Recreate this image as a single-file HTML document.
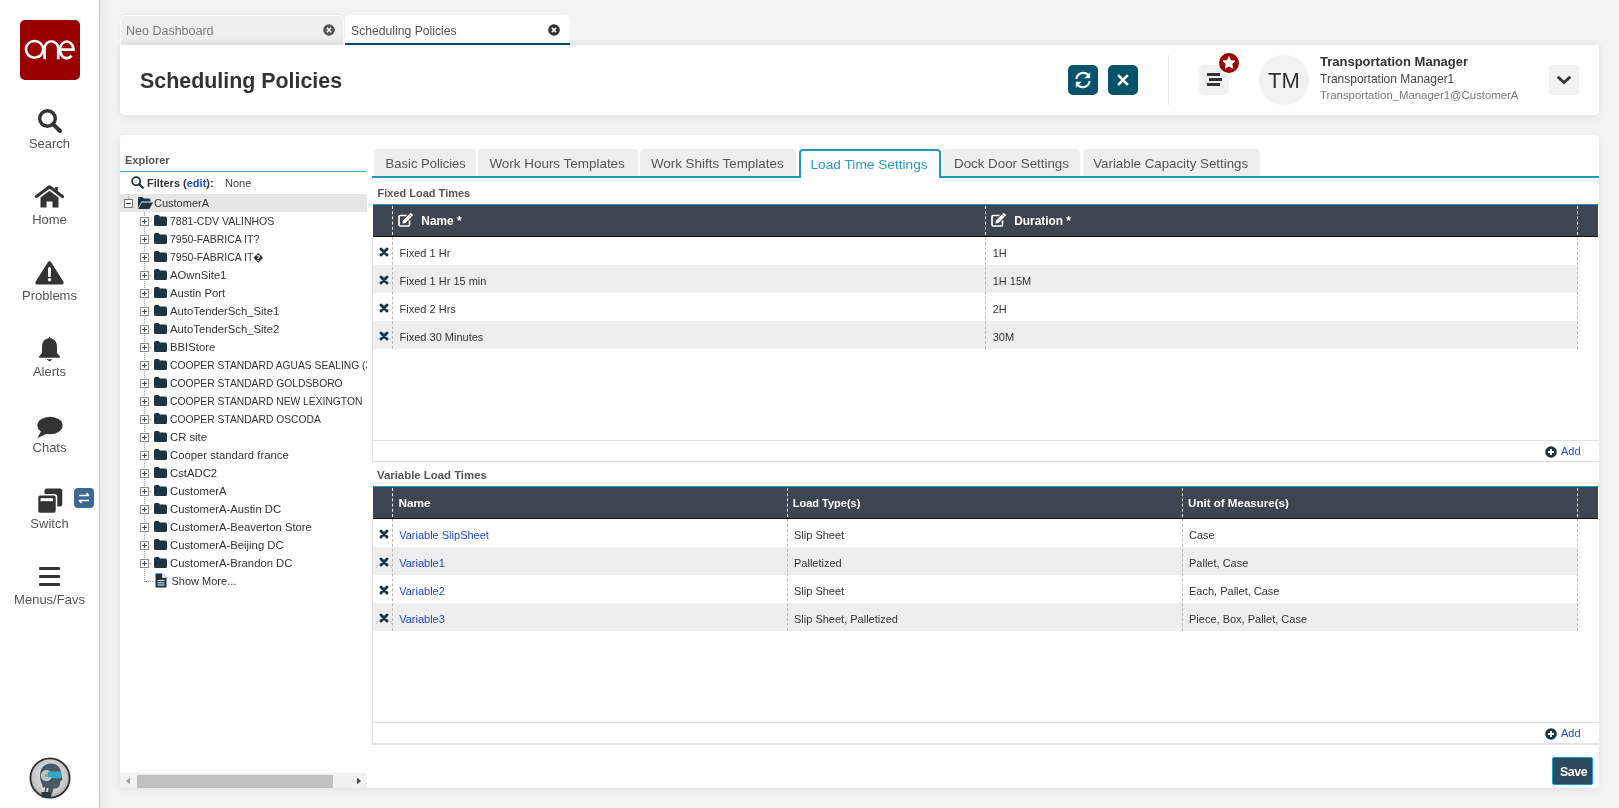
<!DOCTYPE html>
<html><head><meta charset="utf-8">
<style>
*{margin:0;padding:0;box-sizing:border-box}
html,body{width:1619px;height:808px;overflow:hidden;background:#f3f3f3;font-family:"Liberation Sans",sans-serif;color:#333}
.a{position:absolute}
.t{position:absolute;white-space:nowrap;line-height:1}
body{will-change:transform}
svg{position:absolute;display:block}
</style></head><body>

<!-- ============ SIDEBAR ============ -->
<div class="a" style="left:0;top:0;width:100px;height:808px;background:#fff;border-right:1px solid #c9c9c9;box-shadow:3px 0 12px rgba(0,0,0,0.06)"></div>
<div class="a" style="left:20px;top:20px;width:60px;height:60px;background:#990000;border-radius:5px"></div>
<svg style="left:20px;top:20px" width="60" height="60" viewBox="0 0 60 60">
 <g fill="none" stroke="#fff" stroke-width="2.6">
  <ellipse cx="14.55" cy="29.35" rx="8.6" ry="8.4"/>
  <path d="M24.6 39.2 V28.6 A6.8 7.4 0 0 1 38.2 28.6 V39.2"/>
  <path d="M40 29.6 H53.5 A6.8 8.3 0 1 0 51.6 35.6"/>
 </g>
</svg>


<!-- nav -->
<svg style="left:37px;top:108px" width="26" height="26" viewBox="0 0 26 26"><circle cx="10.5" cy="10.5" r="7.8" fill="none" stroke="#333" stroke-width="3.4"/><path d="M16.3 16.3L23 23" stroke="#333" stroke-width="4" stroke-linecap="round"/></svg>
<div class="t" style="left:0;width:99px;text-align:center;top:137px;font-size:13px;color:#555">Search</div>
<svg style="left:35px;top:185px" width="29" height="23" viewBox="0 0 29 23"><path d="M1.5 11.5L14.5 1.8L27.5 11.5" fill="none" stroke="#333" stroke-width="3" stroke-linecap="round" stroke-linejoin="round"/><path d="M21.5 2V7" stroke="#333" stroke-width="2.6"/><path d="M5.5 12.5L14.5 5.8L23.5 12.5V22.5H17.5V16.5H11.5V22.5H5.5Z" fill="#333"/></svg>
<div class="t" style="left:0;width:99px;text-align:center;top:213px;font-size:13px;color:#555">Home</div>
<svg style="left:34px;top:260px" width="31" height="25" viewBox="0 0 31 25"><path d="M15.5 1.2 Q16.6 1.2 17.3 2.4 L29.6 22 Q30.3 23.9 28.3 24.4 H2.7 Q0.7 23.9 1.4 22 L13.7 2.4 Q14.4 1.2 15.5 1.2Z" fill="#333"/><path d="M15.5 8.5V15.5" stroke="#fff" stroke-width="3" stroke-linecap="round"/><circle cx="15.5" cy="19.8" r="1.7" fill="#fff"/></svg>
<div class="t" style="left:0;width:99px;text-align:center;top:289px;font-size:13px;color:#555">Problems</div>
<svg style="left:38px;top:336px" width="23" height="26" viewBox="0 0 23 26"><path d="M11.5 0.5 L12.6 2.3 Q19 3.6 19 11 V17 L22 20.5 Q22.3 21.8 21 21.8 H2 Q0.7 21.8 1 20.5 L4 17 V11 Q4 3.6 10.4 2.3Z" fill="#333"/><path d="M8.5 23.2 H14.5 L11.5 25.6Z" fill="#333"/></svg>
<div class="t" style="left:0;width:99px;text-align:center;top:365px;font-size:13px;color:#555">Alerts</div>
<svg style="left:36px;top:416px" width="27" height="23" viewBox="0 0 27 23"><ellipse cx="14" cy="9.5" rx="12.6" ry="8.8" fill="#333"/><path d="M5 15.5 L1.2 22.3 L11 17.5Z" fill="#333"/></svg>
<div class="t" style="left:0;width:99px;text-align:center;top:441px;font-size:13px;color:#555">Chats</div>
<svg style="left:37px;top:488px" width="26" height="26" viewBox="0 0 26 26"><rect x="7.5" y="0.5" width="17.8" height="18" rx="2.5" fill="#333"/><rect x="0.5" y="6.8" width="19" height="18.8" rx="2.5" fill="#333" stroke="#fff" stroke-width="1.6"/><rect x="3.5" y="10.2" width="12.5" height="3" fill="#fff"/></svg>
<div class="a" style="left:74px;top:488px;width:20px;height:20px;background:#3a6890;border-radius:4px"></div>
<svg style="left:74px;top:488px" width="20" height="20" viewBox="0 0 20 20"><path d="M5 7.5H15M12.3 5L15 7.5 M15 12.5H5M7.7 15L5 12.5" fill="none" stroke="#fff" stroke-width="1.5"/></svg>
<div class="t" style="left:0;width:99px;text-align:center;top:517px;font-size:13px;color:#555">Switch</div>
<div class="a" style="left:39px;top:567px;width:21px;height:3.4px;background:#333;border-radius:1px"></div>
<div class="a" style="left:39px;top:575px;width:21px;height:3.4px;background:#333;border-radius:1px"></div>
<div class="a" style="left:39px;top:583px;width:21px;height:3.4px;background:#333;border-radius:1px"></div>
<div class="t" style="left:0;width:99px;text-align:center;top:593px;font-size:13px;color:#555">Menus/Favs</div>
<!-- avatar -->
<svg style="left:29px;top:757px" width="42" height="42" viewBox="0 0 42 42">
 <defs><radialGradient id="sil" cx="0.5" cy="0.45" r="0.6"><stop offset="0" stop-color="#f6f6f6"/><stop offset="0.75" stop-color="#c4c4c4"/><stop offset="1" stop-color="#9a9a9a"/></radialGradient></defs>
 <circle cx="21" cy="21" r="19.6" fill="url(#sil)" stroke="#2b2e30" stroke-width="1.8"/>
 <path d="M11 19 Q11 7 22 6.5 Q31.5 7 32 16 L33.5 23 L31.5 24 Q31 28 30 30 Q27 32 24.5 31.5 L23 37 Q22 39.5 18 39.5 L13 38 L13.5 33 Q14 29 13 27 Q11 24 11 19Z" fill="#4a5963"/>
 <circle cx="17.5" cy="18.5" r="5.5" fill="#c9d3d9"/>
 <circle cx="17.5" cy="18.5" r="3.6" fill="none" stroke="#c9a85a" stroke-width="0.8"/>
 <circle cx="17.5" cy="18.5" r="2" fill="#8fa0aa"/>
 <path d="M19 14.5 H32.5 V21 Q26 22 19 20Z" fill="#30a9bf"/>
 <path d="M13 31 L16 30 L15 38 L13 38Z M17.5 31 L19.5 31 L18.5 38 L17 38Z" fill="#d5dde2"/>
 <path d="M12.5 35 H22 V40.5 H12.5Z" fill="#2f363b"/>
</svg>

<!-- ============ TOP TABS ============ -->
<div class="a" style="left:120px;top:15px;width:224px;height:30px;background:linear-gradient(#efefef 60%,#e9e9e9);border:1px solid #fbfbfb;border-bottom:none;border-radius:5px 5px 0 0;box-shadow:0 -1px 2px rgba(0,0,0,0.05)"></div>
<div class="t" style="left:126px;top:25px;font-size:12.5px;color:#7a7a7a">Neo Dashboard</div>
<svg style="left:323px;top:24px" width="12" height="12" viewBox="0 0 12 12"><circle cx="6" cy="6" r="5.8" fill="#555"/><path d="M3.8 3.8L8.2 8.2M8.2 3.8L3.8 8.2" stroke="#fff" stroke-width="1.6"/></svg>
<div class="a" style="left:345px;top:15px;width:225px;height:30px;background:#fff;border-radius:5px 5px 0 0;border-bottom:2px solid #03506a"></div>
<div class="t" style="left:351px;top:25px;font-size:12.2px;color:#555">Scheduling Policies</div>
<svg style="left:548px;top:24px" width="12" height="12" viewBox="0 0 12 12"><circle cx="6" cy="6" r="5.8" fill="#333"/><path d="M3.8 3.8L8.2 8.2M8.2 3.8L3.8 8.2" stroke="#fff" stroke-width="1.6"/></svg>

<!-- ============ HEADER CARD ============ -->
<div class="a" style="left:120px;top:45px;width:1479px;height:70px;background:#fff;border-radius:0 0 4px 4px;box-shadow:0 2px 9px rgba(0,0,0,0.07),0 -2px 5px rgba(0,0,0,0.04)"></div>
<div class="t" style="left:140px;top:71px;font-size:21.4px;font-weight:bold;color:#333">Scheduling Policies</div>


<div class="a" style="left:1068px;top:65px;width:30px;height:30px;background:#03546b;border-radius:5px"></div>
<svg style="left:1068px;top:65px" width="30" height="30" viewBox="0 0 30 30"><g fill="none" stroke="#fff" stroke-width="2.2"><path d="M8.4 14 A6.8 6.8 0 0 1 20.6 10.6"/><path d="M21.6 16 A6.8 6.8 0 0 1 9.4 19.4"/></g><path d="M22.2 7.2 V13.2 H16.4Z" fill="#fff"/><path d="M7.8 22.8 V16.8 H13.6Z" fill="#fff"/></svg>
<div class="a" style="left:1108px;top:65px;width:30px;height:30px;background:#03546b;border-radius:5px"></div>
<svg style="left:1108px;top:65px" width="30" height="30" viewBox="0 0 30 30"><path d="M10.2 10.2L19.8 19.8M19.8 10.2L10.2 19.8" stroke="#fff" stroke-width="2.6"/></svg>
<div class="a" style="left:1168px;top:55px;width:1px;height:50px;background:#e6e6e6"></div>
<div class="a" style="left:1199px;top:65px;width:30px;height:30px;background:#f2f2f2;border-radius:5px"></div>
<div class="a" style="left:1207px;top:73px;width:13px;height:2.6px;background:#333"></div>
<div class="a" style="left:1209px;top:78px;width:13px;height:2.6px;background:#333"></div>
<div class="a" style="left:1207px;top:83px;width:13px;height:2.6px;background:#333"></div>
<svg style="left:1219px;top:53px" width="20" height="20" viewBox="0 0 20 20"><circle cx="10" cy="10" r="10" fill="#990000"/><path d="M10 3.6 L11.8 7.6 L16.1 8 L12.9 10.9 L13.8 15.2 L10 13 L6.2 15.2 L7.1 10.9 L3.9 8 L8.2 7.6Z" fill="#fff" stroke="#fff" stroke-width="0.8" stroke-linejoin="round"/></svg>
<div class="a" style="left:1259px;top:55px;width:50px;height:50px;background:#f2f2f2;border-radius:50%"></div>
<div class="t" style="left:1268px;top:70px;font-size:22px;color:#333">TM</div>
<div class="t" style="left:1320px;top:55px;font-size:13px;font-weight:bold;color:#333">Transportation Manager</div>
<div class="t" style="left:1320px;top:73px;font-size:12px;color:#444">Transportation Manager1</div>
<div class="t" style="left:1320px;top:89.5px;font-size:11.35px;color:#777">Transportation_Manager1@CustomerA</div>
<div class="a" style="left:1549px;top:65px;width:30px;height:30px;background:#f2f2f2;border-radius:5px"></div>
<svg style="left:1549px;top:65px" width="30" height="30" viewBox="0 0 30 30"><path d="M8.7 11.8 L15 17.6 L21.3 11.8" fill="none" stroke="#333" stroke-width="2.8"/></svg>

<!-- ============ MAIN CARD ============ -->
<div class="a" style="left:120px;top:135px;width:1479px;height:653px;background:#fff;border-radius:4px;box-shadow:0 2px 9px rgba(0,0,0,0.07)"></div>

<!-- explorer -->
<div class="t" style="left:125px;top:155px;font-size:11px;font-weight:bold;color:#555">Explorer</div>
<div class="a" style="left:120px;top:171px;width:246px;height:1px;background:#3da7c6"></div>
<svg style="left:131px;top:176px" width="13" height="13" viewBox="0 0 13 13"><circle cx="5.2" cy="5.2" r="4" fill="none" stroke="#1d3445" stroke-width="1.8"/><path d="M8.2 8.2L11.8 11.8" stroke="#1d3445" stroke-width="2.2" stroke-linecap="round"/></svg>
<div class="t" style="left:147px;top:178px;font-size:11px;font-weight:bold;color:#333">Filters (<span style="color:#1d4ad8">edit</span>):</div>
<div class="t" style="left:225px;top:178px;font-size:11px;color:#444">None</div>
<div class="a" style="left:120px;top:194px;width:247px;height:18px;background:#e6e6e6"></div>
<div class="a" style="left:144px;top:212px;width:0;height:370px;border-left:1px dotted #a8a8a8"></div>
<div class="a" style="left:128px;top:194px;width:0;height:5px;border-left:1px dotted #a8a8a8"></div>
<svg style="left:124px;top:199px" width="9" height="9" viewBox="0 0 9 9"><rect x="0.5" y="0.5" width="8" height="8" fill="#fff" stroke="#777"/><path d="M2 4.5H7" stroke="#333" stroke-width="1"/></svg>
<svg style="left:138px;top:197px" width="15" height="12" viewBox="0 0 15 12"><path d="M0 1.4 Q0 0 1.4 0 H4.4 L5.8 1.6 H11 Q12.4 1.6 12.4 3 V4.4 H3.6 L0 11Z" fill="#1d3445"/><path d="M3.8 5.4 H15 L11.4 12 H0.2Z" fill="#1d3445"/></svg>
<div class="t" style="left:154px;top:198px;font-size:11px;color:#333">CustomerA</div>
<svg style="left:140px;top:217px" width="9" height="9" viewBox="0 0 9 9"><rect x="0.5" y="0.5" width="8" height="8" fill="#fff" stroke="#8c8c8c"/><path d="M2 4.5H7M4.5 2V7" stroke="#4a4a4a" stroke-width="1"/></svg>
<div class="a" style="left:150px;top:221px;width:1px;height:1px;background:#aaa"></div>
<svg style="left:154px;top:215px" width="13" height="11" viewBox="0 0 13 11"><path d="M0 1.6 Q0 0 1.6 0 H4.6 L6 1.6 H11.4 Q13 1.6 13 3.2 V9.4 Q13 11 11.4 11 H1.6 Q0 11 0 9.4Z" fill="#1d3445"/></svg>
<div class="t" style="left:170px;top:216px;font-size:10.5px;color:#333;max-width:197px;overflow:hidden">7881-CDV VALINHOS</div>
<svg style="left:140px;top:235px" width="9" height="9" viewBox="0 0 9 9"><rect x="0.5" y="0.5" width="8" height="8" fill="#fff" stroke="#8c8c8c"/><path d="M2 4.5H7M4.5 2V7" stroke="#4a4a4a" stroke-width="1"/></svg>
<div class="a" style="left:150px;top:239px;width:1px;height:1px;background:#aaa"></div>
<svg style="left:154px;top:233px" width="13" height="11" viewBox="0 0 13 11"><path d="M0 1.6 Q0 0 1.6 0 H4.6 L6 1.6 H11.4 Q13 1.6 13 3.2 V9.4 Q13 11 11.4 11 H1.6 Q0 11 0 9.4Z" fill="#1d3445"/></svg>
<div class="t" style="left:170px;top:234px;font-size:10.5px;color:#333;max-width:197px;overflow:hidden">7950-FABRICA IT?</div>
<svg style="left:140px;top:253px" width="9" height="9" viewBox="0 0 9 9"><rect x="0.5" y="0.5" width="8" height="8" fill="#fff" stroke="#8c8c8c"/><path d="M2 4.5H7M4.5 2V7" stroke="#4a4a4a" stroke-width="1"/></svg>
<div class="a" style="left:150px;top:257px;width:1px;height:1px;background:#aaa"></div>
<svg style="left:154px;top:251px" width="13" height="11" viewBox="0 0 13 11"><path d="M0 1.6 Q0 0 1.6 0 H4.6 L6 1.6 H11.4 Q13 1.6 13 3.2 V9.4 Q13 11 11.4 11 H1.6 Q0 11 0 9.4Z" fill="#1d3445"/></svg>
<div class="t" style="left:170px;top:252px;font-size:10.5px;color:#333;max-width:197px;overflow:hidden">7950-FABRICA IT�</div>
<svg style="left:140px;top:271px" width="9" height="9" viewBox="0 0 9 9"><rect x="0.5" y="0.5" width="8" height="8" fill="#fff" stroke="#8c8c8c"/><path d="M2 4.5H7M4.5 2V7" stroke="#4a4a4a" stroke-width="1"/></svg>
<div class="a" style="left:150px;top:275px;width:1px;height:1px;background:#aaa"></div>
<svg style="left:154px;top:269px" width="13" height="11" viewBox="0 0 13 11"><path d="M0 1.6 Q0 0 1.6 0 H4.6 L6 1.6 H11.4 Q13 1.6 13 3.2 V9.4 Q13 11 11.4 11 H1.6 Q0 11 0 9.4Z" fill="#1d3445"/></svg>
<div class="t" style="left:170px;top:270px;font-size:11.3px;color:#333;max-width:197px;overflow:hidden">AOwnSite1</div>
<svg style="left:140px;top:289px" width="9" height="9" viewBox="0 0 9 9"><rect x="0.5" y="0.5" width="8" height="8" fill="#fff" stroke="#8c8c8c"/><path d="M2 4.5H7M4.5 2V7" stroke="#4a4a4a" stroke-width="1"/></svg>
<div class="a" style="left:150px;top:293px;width:1px;height:1px;background:#aaa"></div>
<svg style="left:154px;top:287px" width="13" height="11" viewBox="0 0 13 11"><path d="M0 1.6 Q0 0 1.6 0 H4.6 L6 1.6 H11.4 Q13 1.6 13 3.2 V9.4 Q13 11 11.4 11 H1.6 Q0 11 0 9.4Z" fill="#1d3445"/></svg>
<div class="t" style="left:170px;top:288px;font-size:11.3px;color:#333;max-width:197px;overflow:hidden">Austin Port</div>
<svg style="left:140px;top:307px" width="9" height="9" viewBox="0 0 9 9"><rect x="0.5" y="0.5" width="8" height="8" fill="#fff" stroke="#8c8c8c"/><path d="M2 4.5H7M4.5 2V7" stroke="#4a4a4a" stroke-width="1"/></svg>
<div class="a" style="left:150px;top:311px;width:1px;height:1px;background:#aaa"></div>
<svg style="left:154px;top:305px" width="13" height="11" viewBox="0 0 13 11"><path d="M0 1.6 Q0 0 1.6 0 H4.6 L6 1.6 H11.4 Q13 1.6 13 3.2 V9.4 Q13 11 11.4 11 H1.6 Q0 11 0 9.4Z" fill="#1d3445"/></svg>
<div class="t" style="left:170px;top:306px;font-size:11.3px;color:#333;max-width:197px;overflow:hidden">AutoTenderSch_Site1</div>
<svg style="left:140px;top:325px" width="9" height="9" viewBox="0 0 9 9"><rect x="0.5" y="0.5" width="8" height="8" fill="#fff" stroke="#8c8c8c"/><path d="M2 4.5H7M4.5 2V7" stroke="#4a4a4a" stroke-width="1"/></svg>
<div class="a" style="left:150px;top:329px;width:1px;height:1px;background:#aaa"></div>
<svg style="left:154px;top:323px" width="13" height="11" viewBox="0 0 13 11"><path d="M0 1.6 Q0 0 1.6 0 H4.6 L6 1.6 H11.4 Q13 1.6 13 3.2 V9.4 Q13 11 11.4 11 H1.6 Q0 11 0 9.4Z" fill="#1d3445"/></svg>
<div class="t" style="left:170px;top:324px;font-size:11.3px;color:#333;max-width:197px;overflow:hidden">AutoTenderSch_Site2</div>
<svg style="left:140px;top:343px" width="9" height="9" viewBox="0 0 9 9"><rect x="0.5" y="0.5" width="8" height="8" fill="#fff" stroke="#8c8c8c"/><path d="M2 4.5H7M4.5 2V7" stroke="#4a4a4a" stroke-width="1"/></svg>
<div class="a" style="left:150px;top:347px;width:1px;height:1px;background:#aaa"></div>
<svg style="left:154px;top:341px" width="13" height="11" viewBox="0 0 13 11"><path d="M0 1.6 Q0 0 1.6 0 H4.6 L6 1.6 H11.4 Q13 1.6 13 3.2 V9.4 Q13 11 11.4 11 H1.6 Q0 11 0 9.4Z" fill="#1d3445"/></svg>
<div class="t" style="left:170px;top:342px;font-size:11.3px;color:#333;max-width:197px;overflow:hidden">BBIStore</div>
<svg style="left:140px;top:361px" width="9" height="9" viewBox="0 0 9 9"><rect x="0.5" y="0.5" width="8" height="8" fill="#fff" stroke="#8c8c8c"/><path d="M2 4.5H7M4.5 2V7" stroke="#4a4a4a" stroke-width="1"/></svg>
<div class="a" style="left:150px;top:365px;width:1px;height:1px;background:#aaa"></div>
<svg style="left:154px;top:359px" width="13" height="11" viewBox="0 0 13 11"><path d="M0 1.6 Q0 0 1.6 0 H4.6 L6 1.6 H11.4 Q13 1.6 13 3.2 V9.4 Q13 11 11.4 11 H1.6 Q0 11 0 9.4Z" fill="#1d3445"/></svg>
<div class="t" style="left:170px;top:360.7px;font-size:10.3px;color:#333;max-width:197px;overflow:hidden">COOPER STANDARD AGUAS SEALING (3</div>
<svg style="left:140px;top:379px" width="9" height="9" viewBox="0 0 9 9"><rect x="0.5" y="0.5" width="8" height="8" fill="#fff" stroke="#8c8c8c"/><path d="M2 4.5H7M4.5 2V7" stroke="#4a4a4a" stroke-width="1"/></svg>
<div class="a" style="left:150px;top:383px;width:1px;height:1px;background:#aaa"></div>
<svg style="left:154px;top:377px" width="13" height="11" viewBox="0 0 13 11"><path d="M0 1.6 Q0 0 1.6 0 H4.6 L6 1.6 H11.4 Q13 1.6 13 3.2 V9.4 Q13 11 11.4 11 H1.6 Q0 11 0 9.4Z" fill="#1d3445"/></svg>
<div class="t" style="left:170px;top:378.7px;font-size:10.3px;color:#333;max-width:197px;overflow:hidden">COOPER STANDARD GOLDSBORO</div>
<svg style="left:140px;top:397px" width="9" height="9" viewBox="0 0 9 9"><rect x="0.5" y="0.5" width="8" height="8" fill="#fff" stroke="#8c8c8c"/><path d="M2 4.5H7M4.5 2V7" stroke="#4a4a4a" stroke-width="1"/></svg>
<div class="a" style="left:150px;top:401px;width:1px;height:1px;background:#aaa"></div>
<svg style="left:154px;top:395px" width="13" height="11" viewBox="0 0 13 11"><path d="M0 1.6 Q0 0 1.6 0 H4.6 L6 1.6 H11.4 Q13 1.6 13 3.2 V9.4 Q13 11 11.4 11 H1.6 Q0 11 0 9.4Z" fill="#1d3445"/></svg>
<div class="t" style="left:170px;top:396.7px;font-size:10.3px;color:#333;max-width:197px;overflow:hidden">COOPER STANDARD NEW LEXINGTON</div>
<svg style="left:140px;top:415px" width="9" height="9" viewBox="0 0 9 9"><rect x="0.5" y="0.5" width="8" height="8" fill="#fff" stroke="#8c8c8c"/><path d="M2 4.5H7M4.5 2V7" stroke="#4a4a4a" stroke-width="1"/></svg>
<div class="a" style="left:150px;top:419px;width:1px;height:1px;background:#aaa"></div>
<svg style="left:154px;top:413px" width="13" height="11" viewBox="0 0 13 11"><path d="M0 1.6 Q0 0 1.6 0 H4.6 L6 1.6 H11.4 Q13 1.6 13 3.2 V9.4 Q13 11 11.4 11 H1.6 Q0 11 0 9.4Z" fill="#1d3445"/></svg>
<div class="t" style="left:170px;top:414.7px;font-size:10.3px;color:#333;max-width:197px;overflow:hidden">COOPER STANDARD OSCODA</div>
<svg style="left:140px;top:433px" width="9" height="9" viewBox="0 0 9 9"><rect x="0.5" y="0.5" width="8" height="8" fill="#fff" stroke="#8c8c8c"/><path d="M2 4.5H7M4.5 2V7" stroke="#4a4a4a" stroke-width="1"/></svg>
<div class="a" style="left:150px;top:437px;width:1px;height:1px;background:#aaa"></div>
<svg style="left:154px;top:431px" width="13" height="11" viewBox="0 0 13 11"><path d="M0 1.6 Q0 0 1.6 0 H4.6 L6 1.6 H11.4 Q13 1.6 13 3.2 V9.4 Q13 11 11.4 11 H1.6 Q0 11 0 9.4Z" fill="#1d3445"/></svg>
<div class="t" style="left:170px;top:432px;font-size:11.3px;color:#333;max-width:197px;overflow:hidden">CR site</div>
<svg style="left:140px;top:451px" width="9" height="9" viewBox="0 0 9 9"><rect x="0.5" y="0.5" width="8" height="8" fill="#fff" stroke="#8c8c8c"/><path d="M2 4.5H7M4.5 2V7" stroke="#4a4a4a" stroke-width="1"/></svg>
<div class="a" style="left:150px;top:455px;width:1px;height:1px;background:#aaa"></div>
<svg style="left:154px;top:449px" width="13" height="11" viewBox="0 0 13 11"><path d="M0 1.6 Q0 0 1.6 0 H4.6 L6 1.6 H11.4 Q13 1.6 13 3.2 V9.4 Q13 11 11.4 11 H1.6 Q0 11 0 9.4Z" fill="#1d3445"/></svg>
<div class="t" style="left:170px;top:450px;font-size:11.3px;color:#333;max-width:197px;overflow:hidden">Cooper standard france</div>
<svg style="left:140px;top:469px" width="9" height="9" viewBox="0 0 9 9"><rect x="0.5" y="0.5" width="8" height="8" fill="#fff" stroke="#8c8c8c"/><path d="M2 4.5H7M4.5 2V7" stroke="#4a4a4a" stroke-width="1"/></svg>
<div class="a" style="left:150px;top:473px;width:1px;height:1px;background:#aaa"></div>
<svg style="left:154px;top:467px" width="13" height="11" viewBox="0 0 13 11"><path d="M0 1.6 Q0 0 1.6 0 H4.6 L6 1.6 H11.4 Q13 1.6 13 3.2 V9.4 Q13 11 11.4 11 H1.6 Q0 11 0 9.4Z" fill="#1d3445"/></svg>
<div class="t" style="left:170px;top:468px;font-size:11.3px;color:#333;max-width:197px;overflow:hidden">CstADC2</div>
<svg style="left:140px;top:487px" width="9" height="9" viewBox="0 0 9 9"><rect x="0.5" y="0.5" width="8" height="8" fill="#fff" stroke="#8c8c8c"/><path d="M2 4.5H7M4.5 2V7" stroke="#4a4a4a" stroke-width="1"/></svg>
<div class="a" style="left:150px;top:491px;width:1px;height:1px;background:#aaa"></div>
<svg style="left:154px;top:485px" width="13" height="11" viewBox="0 0 13 11"><path d="M0 1.6 Q0 0 1.6 0 H4.6 L6 1.6 H11.4 Q13 1.6 13 3.2 V9.4 Q13 11 11.4 11 H1.6 Q0 11 0 9.4Z" fill="#1d3445"/></svg>
<div class="t" style="left:170px;top:486px;font-size:11.3px;color:#333;max-width:197px;overflow:hidden">CustomerA</div>
<svg style="left:140px;top:505px" width="9" height="9" viewBox="0 0 9 9"><rect x="0.5" y="0.5" width="8" height="8" fill="#fff" stroke="#8c8c8c"/><path d="M2 4.5H7M4.5 2V7" stroke="#4a4a4a" stroke-width="1"/></svg>
<div class="a" style="left:150px;top:509px;width:1px;height:1px;background:#aaa"></div>
<svg style="left:154px;top:503px" width="13" height="11" viewBox="0 0 13 11"><path d="M0 1.6 Q0 0 1.6 0 H4.6 L6 1.6 H11.4 Q13 1.6 13 3.2 V9.4 Q13 11 11.4 11 H1.6 Q0 11 0 9.4Z" fill="#1d3445"/></svg>
<div class="t" style="left:170px;top:504px;font-size:11.3px;color:#333;max-width:197px;overflow:hidden">CustomerA-Austin DC</div>
<svg style="left:140px;top:523px" width="9" height="9" viewBox="0 0 9 9"><rect x="0.5" y="0.5" width="8" height="8" fill="#fff" stroke="#8c8c8c"/><path d="M2 4.5H7M4.5 2V7" stroke="#4a4a4a" stroke-width="1"/></svg>
<div class="a" style="left:150px;top:527px;width:1px;height:1px;background:#aaa"></div>
<svg style="left:154px;top:521px" width="13" height="11" viewBox="0 0 13 11"><path d="M0 1.6 Q0 0 1.6 0 H4.6 L6 1.6 H11.4 Q13 1.6 13 3.2 V9.4 Q13 11 11.4 11 H1.6 Q0 11 0 9.4Z" fill="#1d3445"/></svg>
<div class="t" style="left:170px;top:522px;font-size:11.3px;color:#333;max-width:197px;overflow:hidden">CustomerA-Beaverton Store</div>
<svg style="left:140px;top:541px" width="9" height="9" viewBox="0 0 9 9"><rect x="0.5" y="0.5" width="8" height="8" fill="#fff" stroke="#8c8c8c"/><path d="M2 4.5H7M4.5 2V7" stroke="#4a4a4a" stroke-width="1"/></svg>
<div class="a" style="left:150px;top:545px;width:1px;height:1px;background:#aaa"></div>
<svg style="left:154px;top:539px" width="13" height="11" viewBox="0 0 13 11"><path d="M0 1.6 Q0 0 1.6 0 H4.6 L6 1.6 H11.4 Q13 1.6 13 3.2 V9.4 Q13 11 11.4 11 H1.6 Q0 11 0 9.4Z" fill="#1d3445"/></svg>
<div class="t" style="left:170px;top:540px;font-size:11.3px;color:#333;max-width:197px;overflow:hidden">CustomerA-Beijing DC</div>
<svg style="left:140px;top:559px" width="9" height="9" viewBox="0 0 9 9"><rect x="0.5" y="0.5" width="8" height="8" fill="#fff" stroke="#8c8c8c"/><path d="M2 4.5H7M4.5 2V7" stroke="#4a4a4a" stroke-width="1"/></svg>
<div class="a" style="left:150px;top:563px;width:1px;height:1px;background:#aaa"></div>
<svg style="left:154px;top:557px" width="13" height="11" viewBox="0 0 13 11"><path d="M0 1.6 Q0 0 1.6 0 H4.6 L6 1.6 H11.4 Q13 1.6 13 3.2 V9.4 Q13 11 11.4 11 H1.6 Q0 11 0 9.4Z" fill="#1d3445"/></svg>
<div class="t" style="left:170px;top:558px;font-size:11.3px;color:#333;max-width:197px;overflow:hidden">CustomerA-Brandon DC</div>
<div class="a" style="left:145px;top:581px;width:8px;height:0;border-top:1px dotted #999"></div>
<svg style="left:155px;top:573px" width="12" height="15" viewBox="0 0 12 15"><path d="M0.5 0.5 H7.5 L11.5 4.5 V14.5 H0.5Z" fill="#1d3445"/><path d="M7.2 0.5 V4.8 H11.5Z" fill="#fff"/><path d="M2.5 7.5H9.5M2.5 9.8H9.5M2.5 12H9.5" stroke="#fff" stroke-width="1"/></svg>
<div class="t" style="left:171.5px;top:576px;font-size:11px;color:#333">Show More...</div>
<div class="a" style="left:120px;top:773px;width:247px;height:15px;background:#f1f1f1;border-radius:0 0 0 4px"></div>
<div class="a" style="left:137px;top:775px;width:196px;height:13px;background:#c1c1c1"></div>
<svg style="left:124px;top:776px" width="8" height="10" viewBox="0 0 8 10"><path d="M6 1.5V8.5L2 5Z" fill="#a3a3a3"/></svg>
<svg style="left:355px;top:776px" width="8" height="10" viewBox="0 0 8 10"><path d="M2 1.5V8.5L6 5Z" fill="#505050"/></svg>
<!-- content tabs -->
<div class="a" style="left:372px;top:176px;width:1227px;height:2px;background:#1f9abd"></div>
<div class="a" style="left:374px;top:149px;width:102px;height:27px;background:#eeeeee;border-radius:4px 4px 0 0"></div>
<div class="t" style="left:385.6px;top:157px;font-size:13px;color:#555">Basic Policies</div>
<div class="a" style="left:478px;top:149px;width:160px;height:27px;background:#eeeeee;border-radius:4px 4px 0 0"></div>
<div class="t" style="left:489.4px;top:157px;font-size:13.45px;color:#555">Work Hours Templates</div>
<div class="a" style="left:640px;top:149px;width:156px;height:27px;background:#eeeeee;border-radius:4px 4px 0 0"></div>
<div class="t" style="left:650.9px;top:157px;font-size:13.4px;color:#555">Work Shifts Templates</div>
<div class="a" style="left:943px;top:149px;width:137px;height:27px;background:#eeeeee;border-radius:4px 4px 0 0"></div>
<div class="t" style="left:954px;top:157px;font-size:13.35px;color:#555">Dock Door Settings</div>
<div class="a" style="left:1083px;top:149px;width:177px;height:27px;background:#eeeeee;border-radius:4px 4px 0 0"></div>
<div class="t" style="left:1093.2px;top:157px;font-size:13.3px;color:#555">Variable Capacity Settings</div>
<div class="a" style="left:799px;top:149px;width:142px;height:29px;background:#fff;border:2px solid #1f9abd;border-bottom:none;border-radius:4px 4px 0 0"></div>
<div class="t" style="left:810.5px;top:158px;font-size:13.7px;color:#2a9cc2">Load Time Settings</div>
<div class="t" style="left:377.5px;top:188px;font-size:11px;font-weight:bold;color:#555">Fixed Load Times</div>
<div class="a" style="left:373px;top:204px;width:1225px;height:1px;background:#1f9abd"></div>
<div class="a" style="left:373px;top:205px;width:1225px;height:32px;background:#3c4550;border-bottom:1px solid #0e1114"></div>
<div class="a" style="left:373px;top:237px;width:1204px;height:28px;background:#fff"></div>
<div class="a" style="left:373px;top:265px;width:1204px;height:28px;background:#eeeeee"></div>
<div class="a" style="left:373px;top:293px;width:1204px;height:28px;background:#fff"></div>
<div class="a" style="left:373px;top:321px;width:1204px;height:28px;background:#eeeeee"></div>
<div class="a" style="left:392px;top:206px;width:0;height:29px;border-left:1px dashed #e9e9e9"></div>
<div class="a" style="left:392px;top:237px;width:0;height:112px;border-left:1px dashed #b9b9b9"></div>
<div class="a" style="left:985px;top:206px;width:0;height:29px;border-left:1px dashed #e9e9e9"></div>
<div class="a" style="left:985px;top:237px;width:0;height:112px;border-left:1px dashed #b9b9b9"></div>
<div class="a" style="left:1577px;top:206px;width:0;height:29px;border-left:1px dashed #e9e9e9"></div>
<div class="a" style="left:1577px;top:237px;width:0;height:112px;border-left:1px dashed #b9b9b9"></div>
<svg style="left:398px;top:213px" width="16" height="14" viewBox="0 0 16 14"><path d="M8.5 2.5H2.2Q1 2.5 1 3.7V11.8Q1 13 2.2 13H10.3Q11.5 13 11.5 11.8V7.5" fill="none" stroke="#fff" stroke-width="1.7"/><path d="M4.4 10.6 L5 7.6 L12.8 -0.2 L15.2 2.2 L7.4 10 Z" fill="#fff"/><path d="M11.2 1.4 L13.6 3.8" stroke="#3c4550" stroke-width="0.7"/></svg>
<div class="t" style="left:421.3px;top:216px;font-size:11.9px;font-weight:bold;color:#fff">Name *</div>
<svg style="left:991px;top:213px" width="16" height="14" viewBox="0 0 16 14"><path d="M8.5 2.5H2.2Q1 2.5 1 3.7V11.8Q1 13 2.2 13H10.3Q11.5 13 11.5 11.8V7.5" fill="none" stroke="#fff" stroke-width="1.7"/><path d="M4.4 10.6 L5 7.6 L12.8 -0.2 L15.2 2.2 L7.4 10 Z" fill="#fff"/><path d="M11.2 1.4 L13.6 3.8" stroke="#3c4550" stroke-width="0.7"/></svg>
<div class="t" style="left:1014.2px;top:216px;font-size:11.9px;font-weight:bold;color:#fff">Duration *</div>
<svg style="left:378.5px;top:246.5px" width="10" height="10" viewBox="0 0 10 10"><path d="M2 2L8 8M8 2L2 8" stroke="#1d3445" stroke-width="2.9" stroke-linecap="round"/></svg>
<div class="t" style="left:399.6px;top:248px;font-size:11px;color:#333">Fixed 1 Hr</div>
<div class="t" style="left:992.7px;top:248px;font-size:11px;color:#333">1H</div>
<svg style="left:378.5px;top:274.5px" width="10" height="10" viewBox="0 0 10 10"><path d="M2 2L8 8M8 2L2 8" stroke="#1d3445" stroke-width="2.9" stroke-linecap="round"/></svg>
<div class="t" style="left:399.6px;top:276px;font-size:11px;color:#333">Fixed 1 Hr 15 min</div>
<div class="t" style="left:992.7px;top:276px;font-size:11px;color:#333">1H 15M</div>
<svg style="left:378.5px;top:302.5px" width="10" height="10" viewBox="0 0 10 10"><path d="M2 2L8 8M8 2L2 8" stroke="#1d3445" stroke-width="2.9" stroke-linecap="round"/></svg>
<div class="t" style="left:399.6px;top:304px;font-size:11px;color:#333">Fixed 2 Hrs</div>
<div class="t" style="left:992.7px;top:304px;font-size:11px;color:#333">2H</div>
<svg style="left:378.5px;top:330.5px" width="10" height="10" viewBox="0 0 10 10"><path d="M2 2L8 8M8 2L2 8" stroke="#1d3445" stroke-width="2.9" stroke-linecap="round"/></svg>
<div class="t" style="left:399.6px;top:332px;font-size:11px;color:#333">Fixed 30 Minutes</div>
<div class="t" style="left:992.7px;top:332px;font-size:11px;color:#333">30M</div>
<div class="a" style="left:372px;top:237px;width:1px;height:225px;background:#dddddd"></div>
<div class="a" style="left:372px;top:440px;width:1227px;height:22px;border-top:1px solid #dedede;border-bottom:1px solid #dedede;border-left:1px solid #dedede"></div>
<svg style="left:1545px;top:445.5px" width="12" height="12" viewBox="0 0 12 12"><circle cx="6" cy="6" r="5.8" fill="#1d3445"/><path d="M6 3V9M3 6H9" stroke="#fff" stroke-width="2"/></svg><div class="t" style="left:1561px;top:445.5px;font-size:11px;color:#1d4ad8">Add</div>
<div class="t" style="left:377px;top:469.7px;font-size:11.38px;font-weight:bold;color:#555">Variable Load Times</div>
<div class="a" style="left:373px;top:486px;width:1225px;height:1px;background:#1f9abd"></div>
<div class="a" style="left:373px;top:487px;width:1225px;height:32px;background:#3c4550;border-bottom:1px solid #0e1114"></div>
<div class="a" style="left:373px;top:519px;width:1204px;height:28px;background:#fff"></div>
<div class="a" style="left:373px;top:547px;width:1204px;height:28px;background:#eeeeee"></div>
<div class="a" style="left:373px;top:575px;width:1204px;height:28px;background:#fff"></div>
<div class="a" style="left:373px;top:603px;width:1204px;height:28px;background:#eeeeee"></div>
<div class="a" style="left:392px;top:488px;width:0;height:29px;border-left:1px dashed #e9e9e9"></div>
<div class="a" style="left:392px;top:519px;width:0;height:112px;border-left:1px dashed #b9b9b9"></div>
<div class="a" style="left:787px;top:488px;width:0;height:29px;border-left:1px dashed #e9e9e9"></div>
<div class="a" style="left:787px;top:519px;width:0;height:112px;border-left:1px dashed #b9b9b9"></div>
<div class="a" style="left:1182px;top:488px;width:0;height:29px;border-left:1px dashed #e9e9e9"></div>
<div class="a" style="left:1182px;top:519px;width:0;height:112px;border-left:1px dashed #b9b9b9"></div>
<div class="a" style="left:1577px;top:488px;width:0;height:29px;border-left:1px dashed #e9e9e9"></div>
<div class="a" style="left:1577px;top:519px;width:0;height:112px;border-left:1px dashed #b9b9b9"></div>
<div class="t" style="left:398.5px;top:498px;font-size:11.8px;font-weight:bold;color:#fff">Name</div>
<div class="t" style="left:792.7px;top:498px;font-size:11px;font-weight:bold;color:#fff">Load Type(s)</div>
<div class="t" style="left:1188.1px;top:498px;font-size:11.55px;font-weight:bold;color:#fff">Unit of Measure(s)</div>
<svg style="left:378.5px;top:528.5px" width="10" height="10" viewBox="0 0 10 10"><path d="M2 2L8 8M8 2L2 8" stroke="#1d3445" stroke-width="2.9" stroke-linecap="round"/></svg>
<div class="t" style="left:399.2px;top:530px;font-size:11px;color:#1d4ad8">Variable SlipSheet</div>
<div class="t" style="left:794px;top:530px;font-size:11px;color:#333">Slip Sheet</div>
<div class="t" style="left:1189px;top:530px;font-size:11px;color:#333">Case</div>
<svg style="left:378.5px;top:556.5px" width="10" height="10" viewBox="0 0 10 10"><path d="M2 2L8 8M8 2L2 8" stroke="#1d3445" stroke-width="2.9" stroke-linecap="round"/></svg>
<div class="t" style="left:399.2px;top:558px;font-size:11px;color:#1d4ad8">Variable1</div>
<div class="t" style="left:794px;top:558px;font-size:11px;color:#333">Palletized</div>
<div class="t" style="left:1189px;top:558px;font-size:11px;color:#333">Pallet, Case</div>
<svg style="left:378.5px;top:584.5px" width="10" height="10" viewBox="0 0 10 10"><path d="M2 2L8 8M8 2L2 8" stroke="#1d3445" stroke-width="2.9" stroke-linecap="round"/></svg>
<div class="t" style="left:399.2px;top:586px;font-size:11px;color:#1d4ad8">Variable2</div>
<div class="t" style="left:794px;top:586px;font-size:11px;color:#333">Slip Sheet</div>
<div class="t" style="left:1189px;top:586px;font-size:11px;color:#333">Each, Pallet, Case</div>
<svg style="left:378.5px;top:612.5px" width="10" height="10" viewBox="0 0 10 10"><path d="M2 2L8 8M8 2L2 8" stroke="#1d3445" stroke-width="2.9" stroke-linecap="round"/></svg>
<div class="t" style="left:399.2px;top:614px;font-size:11px;color:#1d4ad8">Variable3</div>
<div class="t" style="left:794px;top:614px;font-size:11px;color:#333">Slip Sheet, Palletized</div>
<div class="t" style="left:1189px;top:614px;font-size:11px;color:#333">Piece, Box, Pallet, Case</div>
<div class="a" style="left:372px;top:519px;width:1px;height:225px;background:#dddddd"></div>
<div class="a" style="left:372px;top:722px;width:1227px;height:23px;border-top:1px solid #dedede;border-bottom:2px solid #e2e2e2;border-left:1px solid #dedede"></div>
<svg style="left:1545px;top:727.5px" width="12" height="12" viewBox="0 0 12 12"><circle cx="6" cy="6" r="5.8" fill="#1d3445"/><path d="M6 3V9M3 6H9" stroke="#fff" stroke-width="2"/></svg><div class="t" style="left:1561px;top:727.5px;font-size:11px;color:#1d4ad8">Add</div>
<div class="a" style="left:1552px;top:757px;width:41px;height:28px;background:#2b4a60;border:1px solid #1aa0c0;border-radius:2px"></div>
<div class="t" style="left:1560px;top:765.5px;font-size:12.4px;font-weight:bold;color:#fff;letter-spacing:-0.4px">Save</div>
</body></html>
